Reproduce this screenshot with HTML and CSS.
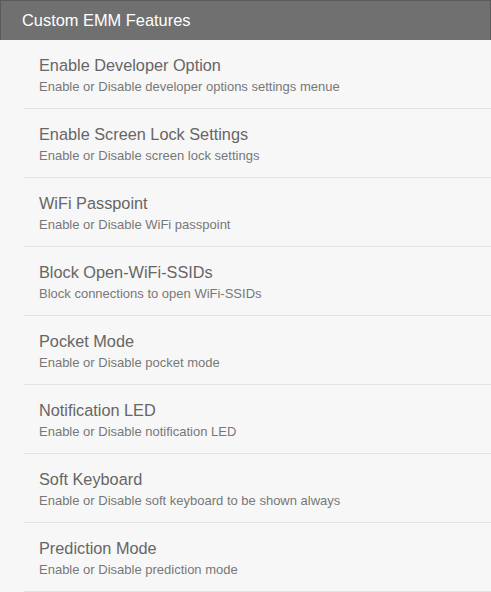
FILE: index.html
```html
<html>
<head>
	<title>Custom EMM Features</title>
	<link rel="stylesheet" href="styles.css">
</head>
<body>
	<div class="panel">
		<div class="panel-heading">Custom EMM Features</div>
		<ul class="feature-list">
			<li class="feature">
				<div class="feature-title">Enable Developer Option</div>
				<div class="feature-desc">Enable or Disable developer options settings menue</div>
			</li>
			<li class="feature">
				<div class="feature-title">Enable Screen Lock Settings</div>
				<div class="feature-desc">Enable or Disable screen lock settings</div>
			</li>
			<li class="feature">
				<div class="feature-title">WiFi Passpoint</div>
				<div class="feature-desc">Enable or Disable WiFi passpoint</div>
			</li>
			<li class="feature">
				<div class="feature-title">Block Open-WiFi-SSIDs</div>
				<div class="feature-desc">Block connections to open WiFi-SSIDs</div>
			</li>
			<li class="feature">
				<div class="feature-title">Pocket Mode</div>
				<div class="feature-desc">Enable or Disable pocket mode</div>
			</li>
			<li class="feature">
				<div class="feature-title">Notification LED</div>
				<div class="feature-desc">Enable or Disable notification LED</div>
			</li>
			<li class="feature">
				<div class="feature-title">Soft Keyboard</div>
				<div class="feature-desc">Enable or Disable soft keyboard to be shown always</div>
			</li>
			<li class="feature">
				<div class="feature-title">Prediction Mode</div>
				<div class="feature-desc">Enable or Disable prediction mode</div>
			</li>
		</ul>
	</div>
</body>
</html>
```
FILE: styles.css
```css
body {
    margin: 0;
    background-color: #f7f7f7;
    font-family: "Liberation Sans", Arial, sans-serif;
}

.panel {
    width: 100%;
}

.panel-heading {
    height: 39px;
    line-height: 39px;
    padding-left: 21px;
    background-color: #707070;
    border: 1px solid #5a5a5a;
    border-bottom: none;
    color: #fff;
    font-size: 16.4px;
}

.feature-list {
    list-style: none;
    margin: 0;
    padding: 0 0 0 24px;
}

.feature {
    height: 68px;
    padding-left: 15px;
    border-bottom: 1px solid #e4e4e4;
}

.feature-title {
    padding-top: 16px;
    font-size: 16.3px;
    color: #666;
}

.feature-desc {
    padding-top: 4px;
    font-size: 13px;
    color: #777;
}
```
